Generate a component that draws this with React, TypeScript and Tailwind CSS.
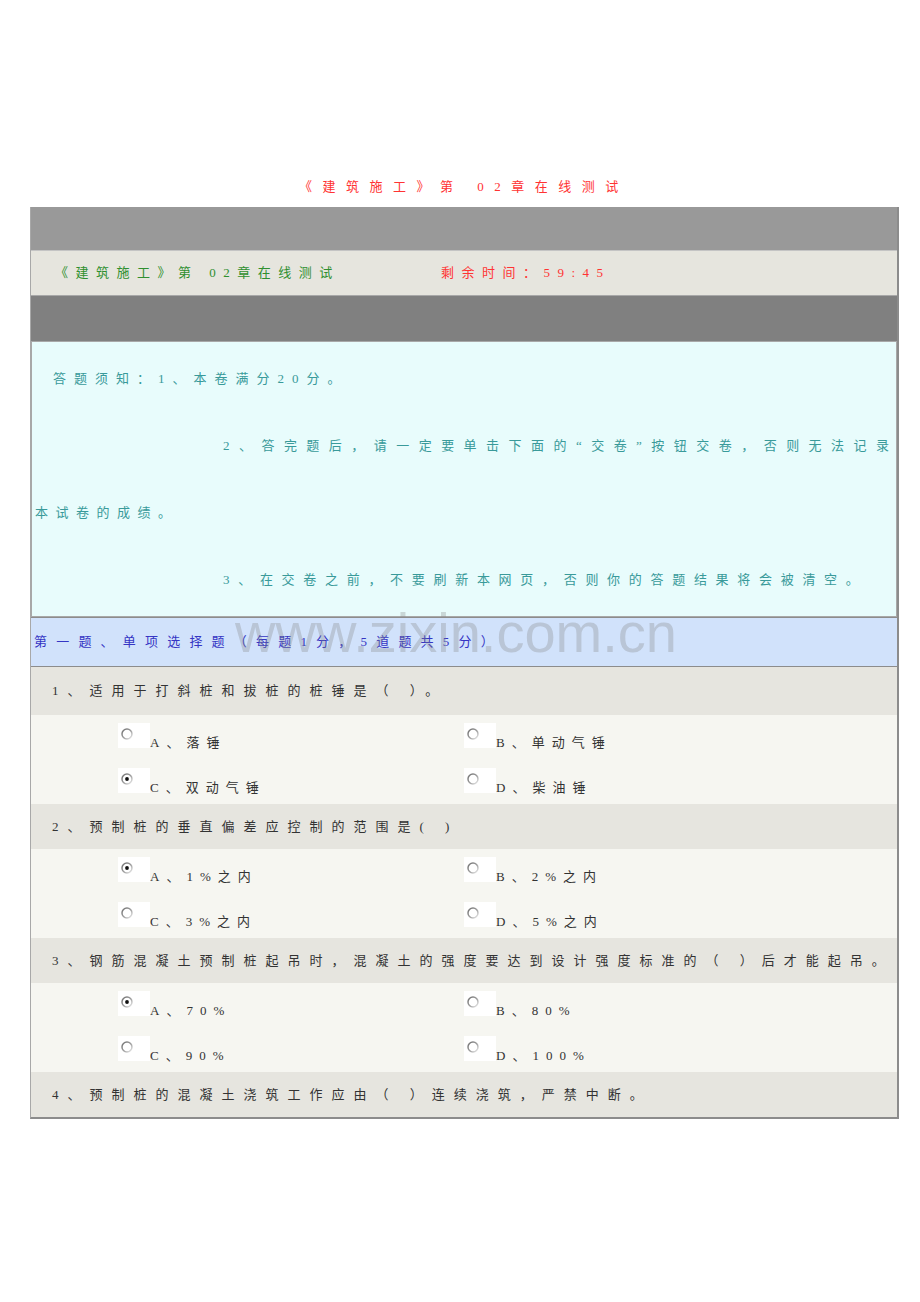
import React from 'react'

type Option = { label: string; checked?: boolean }
type Question = { text: string; options?: Option[] }

const questions: Question[] = [
  {
    text: '1、适用于打斜桩和拔桩的桩锤是（ ）。',
    options: [
      { label: 'A、落锤' },
      { label: 'B、单动气锤' },
      { label: 'C、双动气锤', checked: true },
      { label: 'D、柴油锤' },
    ],
  },
  {
    text: '2、预制桩的垂直偏差应控制的范围是( )',
    options: [
      { label: 'A、1%之内', checked: true },
      { label: 'B、2%之内' },
      { label: 'C、3%之内' },
      { label: 'D、5%之内' },
    ],
  },
  {
    text: '3、钢筋混凝土预制桩起吊时，混凝土的强度要达到设计强度标准的（ ）后才能起吊。',
    options: [
      { label: 'A、70%', checked: true },
      { label: 'B、80%' },
      { label: 'C、90%' },
      { label: 'D、100%' },
    ],
  },
  { text: '4、预制桩的混凝土浇筑工作应由（ ）连续浇筑，严禁中断。' },
]

function Radio({ checked }: { checked?: boolean }) {
  return (
    <svg width="12" height="12" viewBox="0 0 12 12" className="absolute left-[3px] top-[5px]">
      <defs>
        <linearGradient id="ring" x1="0" y1="0" x2="1" y2="1">
          <stop offset="0" stopColor="#6f6f6f" />
          <stop offset="0.55" stopColor="#a0a0a0" />
          <stop offset="1" stopColor="#f0f0f0" />
        </linearGradient>
      </defs>
      <circle cx="6" cy="6" r="5" fill="#ffffff" stroke="url(#ring)" strokeWidth="1.5" />
      {checked && <circle cx="6" cy="6" r="1.9" fill="#111111" />}
    </svg>
  )
}

function OptionCell({ option }: { option: Option }) {
  return (
    <div className="flex items-end h-[25px]">
      <div className="relative w-[32px] h-[25px] bg-white shrink-0">
        <Radio checked={option.checked} />
      </div>
      <span className="text-[13px] leading-[16px] mb-[-3px] tracking-[7px] text-[#333333]">
        {option.label}
      </span>
    </div>
  )
}

export default function App() {
  const font = { fontFamily: '"Liberation Serif", "Noto Sans CJK SC", serif' }

  return (
    <div className="relative w-[920px] min-h-[1302px] bg-white" style={font}>
      <div className="pt-[174px] h-[207px] text-center pl-[8px]">
        <span className="text-[13px] leading-[22px] tracking-[10.5px] text-[#ff3333]">
          《建筑施工》第 02章在线测试
        </span>
      </div>

      <div className="ml-[30px] w-[869px] border-l border-[#a8a8a8] border-r-2 border-r-[#8c8c8c] border-b-2 border-b-[#8c8c8c]">
        <div className="h-[44px] bg-[#999999] border-b border-[#c4c4c4]" />

        <div className="h-[45px] bg-[#e6e5de] flex items-center pl-[24px] text-[13px] tracking-[7.5px] border-b border-[#a8a8a8]">
          <span className="w-[386px] text-[#2f8f2f]">《建筑施工》第 02章在线测试</span>
          <span className="text-[#ff3333]">剩余时间：59:45</span>
        </div>

        <div className="h-[45px] bg-[#808080]" />

        <div className="bg-[#e8fcfc] border border-[#a8a8a8] py-[3px] text-[13px] leading-[67px] text-[#399a9a]">
          <div className="pl-[21px] tracking-[8px]">答题须知：1、本卷满分20分。</div>
          <div className="pl-[191px] pr-[7px] text-justify [text-align-last:justify]">
            2、答完题后，请一定要单击下面的“交卷”按钮交卷，否则无法记录
          </div>
          <div className="pl-[3px] tracking-[7.5px]">本试卷的成绩。</div>
          <div className="pl-[191px] tracking-[8.7px]">
            3、在交卷之前，不要刷新本网页，否则你的答题结果将会被清空。
          </div>
        </div>

        <div className="h-[50px] bg-[#d1e2fb] border-y border-[#8c8c8c] flex items-center pl-[3px] text-[13px] tracking-[9.2px] text-[#3535c4]">
          第一题、单项选择题（每题1分，5道题共5分）
        </div>

        {questions.map((q, i) => (
          <div key={i}>
            <div
              className={`${i === 0 ? 'h-[48px]' : 'h-[45px]'} bg-[#e6e5df] flex items-center pl-[21px] text-[13px] tracking-[9px] text-[#333333]`}
            >
              {q.text}
            </div>
            {q.options && (
              <div className="h-[89px] bg-[#f6f6f1] pl-[87px] pt-[8px] grid grid-cols-[346px_1fr] content-start gap-y-[20px]">
                {q.options.map((o) => (
                  <OptionCell key={o.label} option={o} />
                ))}
              </div>
            )}
          </div>
        ))}
      </div>

      <span
        className="pointer-events-none absolute left-[235px] top-[605px] text-[56px] leading-none text-[#808080]/30"
        style={{ fontFamily: '"Liberation Sans", Arial, sans-serif' }}
      >
        www.zixin.com.cn
      </span>
    </div>
  )
}
